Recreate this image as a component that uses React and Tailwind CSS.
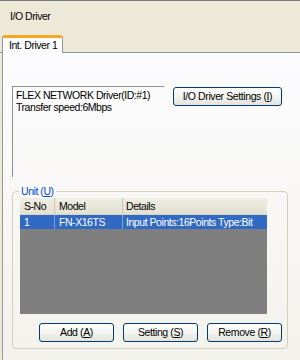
const font = "font-['Liberation_Sans',Arial,sans-serif]";

const XpButton = ({ children, className = '' }) => (
    <button
        className={`h-[19px] rounded-[3px] border border-[#003c74] bg-gradient-to-b from-white via-[#f4f4f0] to-[#e3e2da] text-[10.5px] tracking-[-0.4px] leading-none text-black whitespace-nowrap ${className}`}
    >
        {children}
    </button>
);

const Mn = ({ children }) => <span className="underline underline-offset-[1px]">{children}</span>;

const App = () => {
    return (
        <div className={`w-[300px] h-[360px] overflow-hidden bg-[#ece9d8] ${font} text-[10.5px] tracking-[-0.45px] text-black`}>
            {/* Window title strip */}
            <div className="h-[1px] bg-[#7a7a7a]" />
            <div className="h-[52px] flex flex-col justify-between bg-[#ece9d8] border-b border-[#919b9c]">
                <div className="pl-[10px] pt-[9px] leading-[12px]">I/O Driver</div>
                <div className="ml-[2px] -mb-[1px] w-[61px] h-[18px] rounded-t-[3px] border-t-[3px] border-t-[#f5a623] border-x border-x-[#919b9c] bg-[#fcfcfe] pl-[6px] pt-[1px] leading-[12px] whitespace-nowrap">
                    Int. Driver 1
                </div>
            </div>

            {/* Tab page */}
            <div className="ml-[2px] h-[307px] border-l border-[#919b9c] bg-gradient-to-b from-[#fcfcfe] to-[#f3f2ec] pl-[9px] pt-[33px]">
                <div className="flex items-start">
                    <div className="w-[152px] h-[91px] border-t border-l border-[#8e8f8f] pl-[3px] pt-[2px] leading-[12px] whitespace-nowrap">
                        <div>FLEX NETWORK Driver(ID:#1)</div>
                        <div>Transfer speed:6Mbps</div>
                    </div>
                    <XpButton className="ml-[9px] mt-[1px] w-[109px] h-[18px]">
                        I/O Driver Settings (<Mn>I</Mn>)
                    </XpButton>
                </div>

                {/* Unit group box */}
                <div className="relative mt-[14px] w-[276px] h-[158px] rounded-[4px] border border-[#d0d0bf]">
                    <div className="absolute -top-[7px] left-[6px] px-[2px] bg-[#fafafa] leading-[12px] text-[#0046d5]">
                        Unit (<Mn>U</Mn>)
                    </div>
                    <div className="ml-[7px] mt-[6px] w-[247px] h-[116px] bg-[#7f7f7f] whitespace-nowrap">
                        <div className="flex h-[17px] bg-gradient-to-b from-[#efeee3] to-[#e3e1d2] border-b border-[#d6d2c2] leading-[16px]">
                            <div className="w-[35px] pl-[4px] border-r border-[#c7c5b2]">S-No</div>
                            <div className="w-[68px] pl-[4px] border-r border-[#c7c5b2]">Model</div>
                            <div className="flex-1 pl-[3px]">Details</div>
                        </div>
                        <div className="flex h-[14px] bg-[#316ac5] text-white leading-[14px]">
                            <div className="w-[35px] pl-[4px] border-r border-[#7f9fd9]">1</div>
                            <div className="w-[68px] pl-[4px] border-r border-[#7f9fd9]">FN-X16TS</div>
                            <div className="flex-1 pl-[3px]">Input Points:16Points Type:Bit</div>
                        </div>
                    </div>
                    <div className="flex justify-end gap-[9px] pr-[5px] mt-[9px]">
                        <XpButton className="w-[75px]">
                            Add (<Mn>A</Mn>)
                        </XpButton>
                        <XpButton className="w-[75px]">
                            Setting (<Mn>S</Mn>)
                        </XpButton>
                        <XpButton className="w-[75px]">
                            Remove (<Mn>R</Mn>)
                        </XpButton>
                    </div>
                </div>
            </div>
        </div>
    );
};

export default App;
